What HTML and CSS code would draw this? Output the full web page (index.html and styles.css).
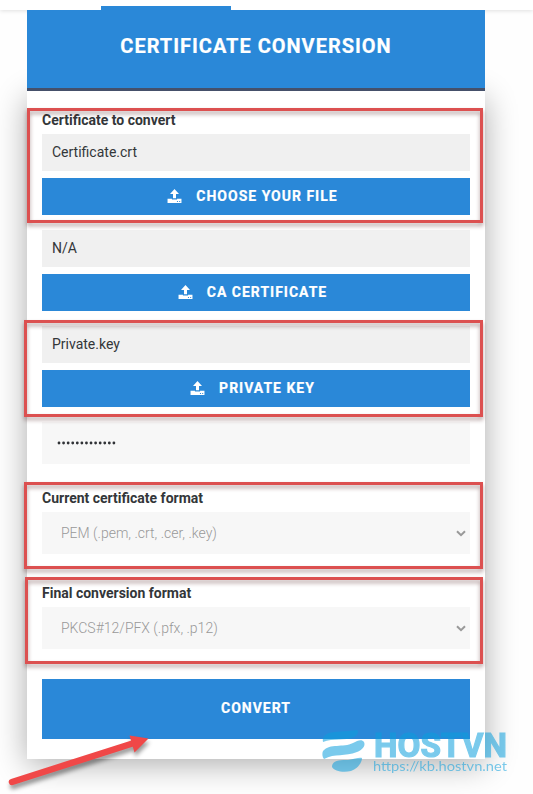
FILE: index.html
```html
<!DOCTYPE html>
<html lang="en">
<head>
<meta charset="utf-8">
<title>Certificate Conversion</title>
<link rel="stylesheet" href="styles.css">
</head>
<body>
<svg class="defs" width="0" height="0" aria-hidden="true">
  <symbol id="upload" viewBox="0 0 14 13">
    <path d="M7 0 11.2 4.6H8.4V8.6H5.6V4.6H2.8Z"/>
    <path fill-rule="evenodd" d="M.5 9H4.6V9.8H9.4V9H13.5V13H.5ZM9.3 11.2V12H10.2V11.2ZM11.4 11.2V12H12.3V11.2Z"/>
  </symbol>
</svg>
<div class="topbar"><span class="tab"></span></div>
<main class="card">
  <h1 class="title">CERTIFICATE CONVERSION</h1>
  <form class="form">
    <div class="label">Certificate to convert</div>
    <div class="file">Certificate.crt</div>
    <div class="upload"><svg class="icon"><use href="#upload"/></svg><span>CHOOSE YOUR FILE</span></div>
    <div class="file">N/A</div>
    <div class="upload"><svg class="icon"><use href="#upload"/></svg><span>CA CERTIFICATE</span></div>
    <div class="file">Private.key</div>
    <div class="upload"><svg class="icon"><use href="#upload"/></svg><span>PRIVATE KEY</span></div>
    <div class="field password"><svg width="60" height="4" viewBox="0 0 60 4"><path d="M2 2H57.200" fill="none" stroke="#303236" stroke-width="2.800" stroke-linecap="round" stroke-dasharray="0.010 4.565"/></svg></div>
    <div class="label spaced">Current certificate format</div>
    <div class="field select"><span class="pem">PEM (.pem, .crt, .cer, .key)</span><svg class="chevron" viewBox="0 0 10 7"><path d="M1 1.2 5 5.2 9 1.2"/></svg></div>
    <div class="label second">Final conversion format</div>
    <div class="field select"><span class="pkcs">PKCS#12/PFX (.pfx, .p12)</span><svg class="chevron" viewBox="0 0 10 7"><path d="M1 1.2 5 5.2 9 1.2"/></svg></div>
    <div class="convert">CONVERT</div>
  </form>
</main>
<div class="mark mark-a"></div>
<div class="mark mark-b"></div>
<div class="mark mark-c"></div>
<div class="mark mark-d"></div>
<svg class="arrow" width="170" height="84" viewBox="0 710 170 84">
  <path d="M12 782 134 743" stroke="#f04848" stroke-width="6.5" stroke-linecap="round"/>
  <path d="M129.500 735.500 148.500 738.500 134.500 752.500Z" fill="#f04848"/>
</svg>
<svg class="watermark" width="223" height="79" viewBox="310 715 223 79">
  <path d="M323 742C322 738 324 735 329 733C335 731 346 732 357 730C359 731 358 735 354 737C345 741 333 738 323 742Z"/>
  <path d="M323 751C330 743 343 748 353 743C358 740 362 739 364 742C366 746 362 750 357 752C345 757 335 753 324 759C322 757 322 753 323 751Z"/>
  <path d="M332 767C332 760 340 760 348 760C355 759 359 757 362 758C362 763 357 769 351 771C343 773 334 771 332 767Z"/>
  <text class="brand" x="374" y="756.500" textLength="133" lengthAdjust="spacingAndGlyphs">HOSTVN</text>
  <text class="url" x="373" y="771" textLength="134" lengthAdjust="spacingAndGlyphs">https://kb.hostvn.net</text>
</svg>
</body>
</html>
```
FILE: styles.css
```css
* { box-sizing: border-box; }
body {
  margin: 0;
  height: 794px;
  position: relative;
  overflow: hidden;
  background: #fefefe;
  font-family: Roboto, "Liberation Sans", sans-serif;
  color: #333639;
}
.defs { position: absolute; }
.topbar {
  height: 10px;
  padding: 6px 0 0 101px;
  background: #fff;
  box-shadow: 0 1px 4px rgba(0, 0, 0, .12);
}
.tab { display: block; width: 130px; height: 4px; background: #2a88d8; }
.card {
  position: relative;
  width: 458px;
  height: 749px;
  margin-left: 27px;
  background: #fff;
}
.card::before {
  content: "";
  position: absolute;
  z-index: -1;
  inset: 84px 0 0;
  box-shadow: 0 5px 30px rgba(0, 0, 0, .33);
}
.title {
  margin: 0;
  height: 81px;
  background: #2a88d8;
  border-bottom: 3px solid #45506a;
  color: #fff;
  font-size: 20px;
  font-weight: 700;
  line-height: 72px;
  letter-spacing: .98px;
  text-align: center;
  -webkit-text-stroke: .2px #fff;
}
.form { padding: 19px 15px 0; }
.label {
  height: 24px;
  font-size: 14px;
  font-weight: 700;
  line-height: 20px;
}
.file {
  height: 37px;
  margin-bottom: 7px;
  padding-left: 10px;
  background: #f0f0f0;
  font-size: 14px;
  line-height: 37px;
}
.upload {
  display: flex;
  align-items: center;
  justify-content: center;
  gap: 14px;
  height: 37px;
  margin-bottom: 15px;
  padding: 0 7px 2px 0;
  background: #2a88d8;
  color: #fff;
  font-size: 14px;
  font-weight: 700;
  letter-spacing: 1px;
  -webkit-text-stroke: .2px #fff;
}
.icon { width: 15px; height: 14px; fill: #fff; }
.field { display: flex; align-items: center; height: 42px; background: #f7f7f7; }
.password { padding-left: 15px; }
.spaced { margin-top: 24px; }
.second { margin-top: 29px; }
.select {
  justify-content: space-between;
  padding: 0 4px 0 19px;
  color: #999;
  font-size: 14px;
  font-weight: 300;
}
.chevron { width: 10px; height: 7px; fill: none; stroke: #999; stroke-width: 2; }
.convert {
  height: 60px;
  margin-top: 30px;
  background: #2a88d8;
  color: #fff;
  font-size: 14px;
  font-weight: 700;
  line-height: 59px;
  letter-spacing: 1px;
  text-align: center;
  -webkit-text-stroke: .2px #fff;
}
.mark {
  position: absolute;
  border: 3px solid #dc5050;
  filter: drop-shadow(0 3px 2px rgba(70, 20, 20, .4));
}
.mark-a { left: 27px; top: 108px; width: 456px; height: 115px; }
.mark-b { left: 24px; top: 320px; width: 459px; height: 97px; }
.mark-c { left: 24px; top: 482px; width: 459px; height: 87px; }
.mark-d { left: 25px; top: 577px; width: 458px; height: 87px; }
.arrow { position: absolute; left: 0; top: 710px; filter: drop-shadow(1px 4px 2px rgba(0, 0, 0, .4)); }
.watermark { position: absolute; left: 310px; top: 715px; fill: #0b9fdd; opacity: .54; }
.brand { font: 700 33px Roboto, sans-serif; stroke: #0b9fdd; stroke-width: 1.2px; }
.url { font: 400 13.5px Lato, sans-serif; }
```
